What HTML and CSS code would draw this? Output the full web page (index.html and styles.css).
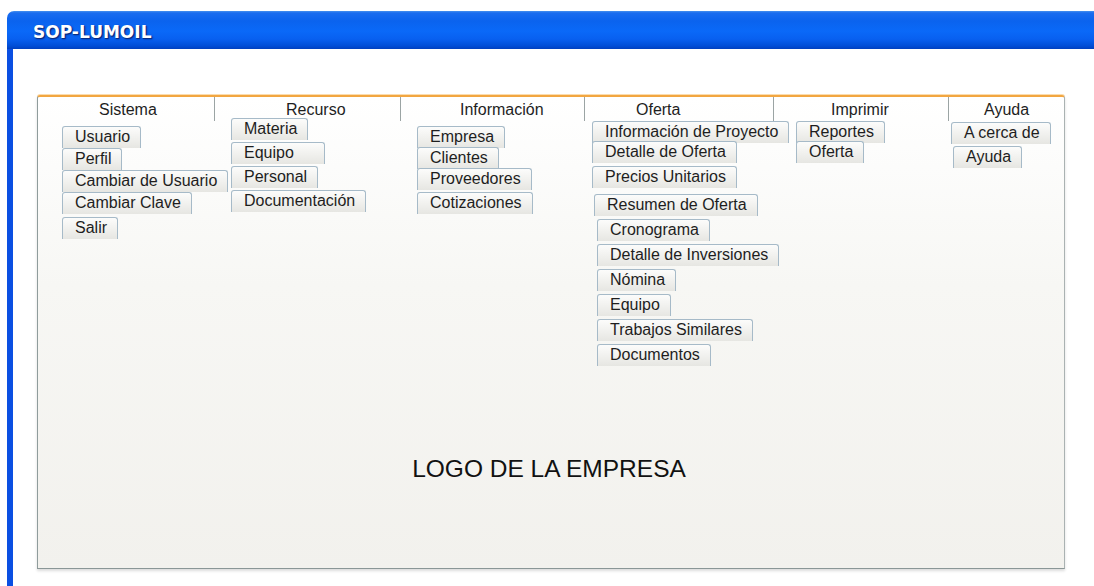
FILE: index.html
```html
<!DOCTYPE html>
<html lang="es">
<head>
  <meta charset="UTF-8" />
  <meta name="viewport" content="width=device-width, initial-scale=1.0" />
  <title>SOP-LUMOIL</title>
  <link rel="stylesheet" href="styles.css">
</head>
<body>
  <div class="window">
    <div class="titlebar"><span class="title">SOP-LUMOIL</span></div>

    <div class="window-body">
      <div class="panel">
        <!-- Menus -->
        <div class="menus">
          <div class="menu col-sistema">
            <div class="menu-head">Sistema</div>
            <div class="menu-items">
              <div class="btn">Usuario</div>
              <div class="btn">Perfil</div>
              <div class="btn">Cambiar de Usuario</div>
              <div class="btn">Cambiar Clave</div>
              <div class="btn sp">Salir</div>
            </div>
          </div>

          <div class="menu col-recurso">
            <div class="menu-head">Recurso</div>
            <div class="menu-items">
              <div class="btn">Materia</div>
              <div class="btn wide">Equipo</div>
              <div class="btn">Personal</div>
              <div class="btn">Documentación</div>
            </div>
          </div>

          <div class="menu col-info">
            <div class="menu-head">Información</div>
            <div class="menu-items">
              <div class="btn">Empresa</div>
              <div class="btn">Clientes</div>
              <div class="btn">Proveedores</div>
              <div class="btn sp">Cotizaciones</div>
            </div>
          </div>

          <div class="menu col-oferta">
            <div class="menu-head">Oferta</div>
            <div class="menu-items">
              <div class="btn">Información de Proyecto</div>
              <div class="btn tight">Detalle de Oferta</div>
              <div class="btn">Precios Unitarios</div>
              <div class="btn sp in-sm">Resumen de Oferta</div>
              <div class="btn in">Cronograma</div>
              <div class="btn in">Detalle de Inversiones</div>
              <div class="btn in">Nómina</div>
              <div class="btn in">Equipo</div>
              <div class="btn in">Trabajos Similares</div>
              <div class="btn in">Documentos</div>
            </div>
          </div>

          <div class="menu col-imprimir">
            <div class="menu-head">Imprimir</div>
            <div class="menu-items">
              <div class="btn">Reportes</div>
              <div class="btn tight">Oferta</div>
            </div>
          </div>

          <div class="menu col-ayuda">
            <div class="menu-head">Ayuda</div>
            <div class="menu-items">
              <div class="btn">A cerca de</div>
              <div class="btn in-sm">Ayuda</div>
            </div>
          </div>
        </div>

        <div class="logo">LOGO DE LA EMPRESA</div>
      </div>
    </div>
  </div>
</body>
</html>
```

FILE: styles.css
```css
body {
  margin: 0;
  background-color: #ffffff;
  font-family: "Liberation Sans", Arial, sans-serif;
  color: #1e1e1e;
  overflow: hidden;
}
.window {
  margin: 11px 0 0 7px;
  height: 575px;
  display: flex;
  flex-direction: column;
}
.titlebar {
  height: 38px;
  box-sizing: border-box;
  padding: 3px 0 0 26px;
  border-radius: 7px 0 0 0;
  background: linear-gradient(to bottom,
    #4690ee 0px, #1a6cef 2px, #0b63ee 10px, #0a69f8 20px,
    #0860f0 28px, #004dd6 35px, #003fbe 38px);
}
.title {
  font-family: "DejaVu Sans", sans-serif;
  font-weight: bold;
  font-size: 17px;
  line-height: 36px;
  color: #ffffff;
  text-shadow: 1px 1px 0 #0a2c85, 1px 1px 2px #06246e;
}
.window-body {
  flex: 1;
  border-left: 6px solid #0a4fe2;
  padding: 46px 0 0 24px;
}
.panel {
  width: 1028px;
  height: 474px;
  box-sizing: border-box;
  border-top: 2px solid #f2a641;
  border-left: 1px solid #8f9c9c;
  border-right: 1px solid #aab2b2;
  border-bottom: 1px solid #8a9696;
  border-radius: 3px 3px 0 0;
  background: linear-gradient(to bottom, #ffffff 0%, #f7f7f4 40%, #f2f1ed 100%);
  box-shadow: 0 -1px 0 #fbdcae, 0 2px 3px rgba(0, 0, 0, 0.14);
}
.menus {
  height: 272px;
  display: grid;
  grid-template-columns: 177px 186px 184px 189px 175px 1fr;
}
.menu-head {
  height: 24px;
  box-sizing: border-box;
  padding: 3px 0 0 var(--lx);
  font-size: 16px;
  line-height: 20px;
  border-right: 1px solid #9ba4a4;
  white-space: nowrap;
}
.col-ayuda .menu-head {
  border-right: none;
}
.menu-items {
  display: flex;
  flex-direction: column;
  align-items: flex-start;
  padding-left: var(--x);
  margin-top: var(--t);
}
.btn {
  height: 22px;
  box-sizing: border-box;
  padding: 0 10px 0 12px;
  font-size: 16px;
  line-height: 20px;
  white-space: nowrap;
  border: 1px solid #a6bac8;
  border-bottom: none;
  border-radius: 3px 3px 0 0;
  background: linear-gradient(to bottom, #fcfcfb 0%, #efefec 60%, #e6e6e2 100%);
}
.btn + .btn {
  margin-top: var(--g);
}
.btn.sp {
  margin-top: calc(var(--g) + 3px);
}
.btn.tight {
  margin-top: -2px;
}
.btn.in {
  margin-left: 5px;
}
.btn.in-sm {
  margin-left: 2px;
}
.btn.wide {
  min-width: 94px;
}

.col-sistema { --lx: 61px; --x: 24px; --t: 5px; --g: 0px; }
.col-recurso { --lx: 71px; --x: 16px; --t: -3px; --g: 2px; }
.col-info { --lx: 59px; --x: 16px; --t: 5px; --g: -1px; }
.col-oferta { --lx: 51px; --x: 7px; --t: 0px; --g: 3px; }
.col-imprimir { --lx: 57px; --x: 22px; --t: 0px; --g: 0px; }
.col-ayuda { --lx: 35px; --x: 2px; --t: 1px; --g: 2px; }

.logo {
  margin-top: 86px;
  padding-right: 4px;
  text-align: center;
  font-size: 24.5px;
  line-height: 28px;
  color: #111111;
}
```
